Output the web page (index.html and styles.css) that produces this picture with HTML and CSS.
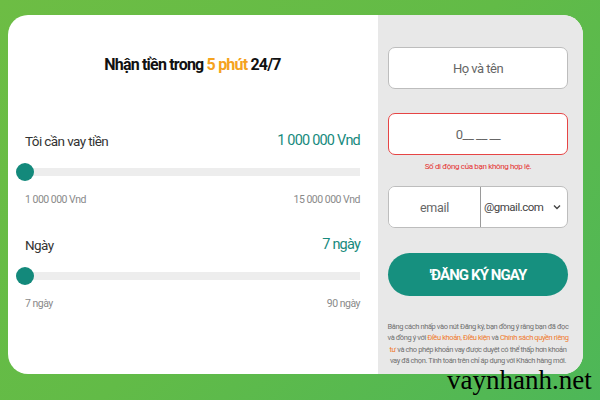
FILE: index.html
```html
<!DOCTYPE html>
<html>
<head>
  <meta charset="UTF-8">
  <meta name="viewport" content="width=device-width, initial-scale=1.0">
  <title>Vay nhanh</title>
  <link rel="stylesheet" href="styles.css">
</head>
<body>
  <div class="card">
    <div class="calc">
      <h1 class="title">Nhận tiền trong <span class="hl">5 phút</span> 24/7</h1>

      <!-- So tien -->
      <div class="field">
        <div class="field-head">
          <span class="label">Tôi cần vay tiền</span>
          <span class="value">1 000 000 Vnd</span>
        </div>
        <div class="track"><span class="thumb"></span></div>
        <div class="range">
          <span>1 000 000 Vnd</span>
          <span>15 000 000 Vnd</span>
        </div>
      </div>

      <!-- So ngay -->
      <div class="field field-days">
        <div class="field-head">
          <span class="label">Ngày</span>
          <span class="value">7 ngày</span>
        </div>
        <div class="track"><span class="thumb"></span></div>
        <div class="range">
          <span>7 ngày</span>
          <span>90 ngày</span>
        </div>
      </div>
    </div>

    <form class="signup">
      <input type="text" class="box" placeholder="Họ và tên">
      <input type="text" class="box box-error" placeholder="0__ __ __">
      <div class="error">Số di động của bạn không hợp lệ.</div>
      <div class="box email">
        <input type="text" class="email-name" placeholder="email">
        <div class="email-domain">
          <span>@gmail.com</span>
          <svg width="8" height="6" viewBox="0 0 8 6"><path d="M1 1.5 L4 4.5 L7 1.5" fill="none" stroke="#444" stroke-width="1.4"/></svg>
        </div>
      </div>
      <button type="button" class="submit">'ĐĂNG KÝ NGAY</button>
      <p class="terms">
        Bằng cách nhấp vào nút Đăng ký, bạn đồng ý rằng bạn đã đọc<br>
        và đồng ý với <a href="#">Điều khoản, Điều kiện</a> và <a href="#">Chính sách quyền riêng</a><br>
        <a href="#">tư</a> và cho phép khoản vay được duyệt có thể thấp hơn khoản<br>
        vay đã chọn. Tính toán trên chỉ áp dụng với Khách hàng mới.
      </p>
    </form>
  </div>

  <div class="watermark">vaynhanh.net</div>
</body>
</html>
```

FILE: styles.css
```css
body {
  margin: 0;
  height: 400px;
  overflow: hidden;
  font-family: 'Roboto', sans-serif;
  background: linear-gradient(135deg, #6dbd44 0%, #62bb47 50%, #4db758 100%);
  color: #333;
  position: relative;
}
.card {
  display: flex;
  margin: 15px 17px 0 8px;
  height: 359px;
  background: #fff;
  border-radius: 20px;
  overflow: hidden;
}
.calc {
  flex: none;
  width: 370px;
  box-sizing: border-box;
  padding: 39px 18px 0 17px;
}
.title {
  margin: 0;
  text-align: center;
  font-size: 16px;
  line-height: 22px;
  font-weight: bold;
  color: #111;
  letter-spacing: -0.8px;
}
.hl {
  color: #f5a31e;
}
.field {
  margin-top: 55px;
}
.field-days {
  margin-top: 28px;
}
.field-head {
  display: flex;
  justify-content: space-between;
  align-items: center;
  line-height: 20px;
}
.label {
  font-size: 13.5px;
  letter-spacing: -0.6px;
  color: #333;
}
.value {
  font-size: 14.5px;
  letter-spacing: -0.8px;
  color: #178a7d;
}
.track {
  display: flex;
  align-items: center;
  height: 8px;
  margin-top: 17px;
  background: #ededed;
}
.thumb {
  width: 18px;
  height: 18px;
  margin-left: -9px;
  border-radius: 50%;
  background: #13897b;
}
.range {
  display: flex;
  justify-content: space-between;
  margin-top: 17px;
  font-size: 10.5px;
  letter-spacing: -0.5px;
  line-height: 14px;
  color: #8a8a8a;
}
.signup {
  flex: 1;
  min-width: 0;
  background: #e8e8e8;
  padding: 32px 15px 0 10px;
}
.box {
  display: block;
  width: 100%;
  height: 42px;
  box-sizing: border-box;
  border: 1px solid #bdbdbd;
  border-radius: 7px;
  background: #fff;
  font-family: inherit;
  font-size: 13px;
  letter-spacing: -0.5px;
  text-align: center;
  color: #555;
}
.box::placeholder {
  color: #666;
}
.box-error {
  margin-top: 24px;
  border-color: #e64545;
}
.error {
  margin-top: 6px;
  text-align: center;
  font-size: 8px;
  letter-spacing: -0.35px;
  line-height: 12px;
  color: #e53030;
}
.email {
  display: flex;
  margin-top: 13px;
  overflow: hidden;
}
.email-name {
  flex: none;
  width: 91px;
  min-width: 0;
  padding: 0;
  border: none;
  border-right: 1px solid #9a9a9a;
  font-family: inherit;
  font-size: 12.5px;
  letter-spacing: -0.3px;
  text-align: center;
  outline: none;
}
.email-name::placeholder {
  color: #666;
}
.email-domain {
  flex: 1;
  min-width: 0;
  display: flex;
  align-items: center;
  justify-content: space-between;
  padding: 0 6px 0 3px;
  font-size: 11.5px;
  letter-spacing: -0.5px;
  color: #444;
}
.submit {
  display: block;
  width: 100%;
  height: 43px;
  margin-top: 25px;
  border: none;
  border-radius: 22px;
  background: #16907f;
  color: #fff;
  font-family: inherit;
  font-size: 15px;
  letter-spacing: -0.9px;
  font-weight: bold;
  cursor: pointer;
}
.terms {
  margin: 25px -6px 0;
  text-align: center;
  white-space: nowrap;
  font-size: 7.5px;
  letter-spacing: -0.4px;
  line-height: 11.3px;
  color: #707070;
}
.terms a {
  color: #f07a2c;
  text-decoration: none;
}
.watermark {
  position: absolute;
  left: 447px;
  top: 367px;
  font-family: 'Liberation Serif', serif;
  font-size: 27px;
  line-height: 27px;
  color: #000;
}
```
